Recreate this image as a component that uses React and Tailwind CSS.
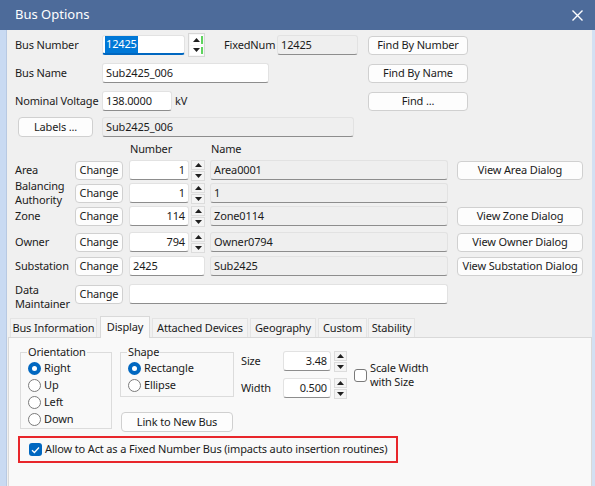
import clsx from "clsx";

function TextBox({ className, children, right = false, ro = false, focus = false }) {
  return (
    <div
      className={clsx(
        "h-[20px] shrink-0 flex items-center px-[3px] rounded-[3px] border border-[#e2e2e2] whitespace-nowrap overflow-hidden",
        focus ? "border-b-2 border-b-[#0067c0]" : "border-b-[#8d8d8d]",
        ro ? "bg-[#efefef]" : "bg-white",
        right && "justify-end",
        className
      )}
    >
      {children}
    </div>
  );
}

function Btn({ className, children }) {
  return (
    <button
      className={clsx(
        "h-[19px] shrink-0 flex items-center justify-center bg-[#fdfdfd] border border-[#d0d0d0] rounded-[4px] whitespace-nowrap",
        className
      )}
    >
      {children}
    </button>
  );
}

function Arrow({ up }) {
  return (
    <svg width="7" height="4" viewBox="0 0 7 4">
      <path d={up ? "M0 4 L3.5 0 L7 4Z" : "M0 0 L3.5 4 L7 0Z"} fill="#1f1f1f" />
    </svg>
  );
}

function Spin({ className }) {
  return (
    <div className={clsx("h-[21px] shrink-0 flex flex-col gap-[1px]", className)}>
      <div className="flex-1 bg-[#f4f4f4] border border-[#dcdcdc] flex items-center justify-center">
        <Arrow up />
      </div>
      <div className="flex-1 bg-[#f4f4f4] border border-[#dcdcdc] flex items-center justify-center">
        <Arrow />
      </div>
    </div>
  );
}

function BigSpin() {
  return (
    <div className="ml-[3px] w-[17px] h-[24px] shrink-0 flex flex-col gap-[1px] bg-[#f7f7f7] border border-[#d6d6d6] p-[1px]">
      <div className="flex-1 flex items-center justify-center relative bg-white">
        <Arrow up />
        <div className="absolute right-0 top-[1px] bottom-[1px] w-[2px] bg-[#5fd35f]" />
      </div>
      <div className="flex-1 flex items-center justify-center relative bg-white">
        <Arrow />
        <div className="absolute right-0 top-[1px] bottom-[1px] w-[2px] bg-[#5fd35f]" />
      </div>
    </div>
  );
}

function Radio({ on, label }) {
  return (
    <div className="h-[17px] flex items-center">
      {on ? (
        <div className="w-[13px] h-[13px] rounded-full bg-[#0067c0] flex items-center justify-center">
          <div className="w-[5px] h-[5px] rounded-full bg-white" />
        </div>
      ) : (
        <div className="w-[13px] h-[13px] rounded-full bg-white border border-[#7a7a7a]" />
      )}
      <span className="ml-[3px]">{label}</span>
    </div>
  );
}

function Check({ on }) {
  return on ? (
    <div className="w-[13px] h-[13px] shrink-0 rounded-[3px] bg-[#0067c0] flex items-center justify-center">
      <svg width="9" height="8" viewBox="0 0 9 8">
        <path d="M1 4.2 L3.4 6.5 L8 1.5" stroke="white" strokeWidth="1.3" fill="none" />
      </svg>
    </div>
  ) : (
    <div className="w-[13px] h-[13px] shrink-0 rounded-[3px] bg-white border border-[#7a7a7a]" />
  );
}

function RefRow({ className, label, num, name, view, spin = true }) {
  return (
    <div className={clsx("h-[22px] flex items-center pl-[8px]", className)}>
      <span className="w-[60px] shrink-0 leading-[14px]">{label}</span>
      <Btn className="w-[48px]">Change</Btn>
      {spin ? (
        <>
          <TextBox right className="ml-[6px] w-[60px]">{num}</TextBox>
          <Spin className="ml-[2px] w-[14px]" />
        </>
      ) : (
        <TextBox className="ml-[6px] w-[76px]">{num}</TextBox>
      )}
      <TextBox ro className="ml-[5px] w-[238px]">{name}</TextBox>
      {view && <Btn className="ml-[9px] w-[126px]">{view}</Btn>}
    </div>
  );
}

export default function App() {
  const tabs = [
    { name: "Bus Information", w: "w-[87px] ml-[3px]" },
    { name: "Display", w: "w-[50px] ml-[3px]", on: true },
    { name: "Attached Devices", w: "w-[96px] ml-[2px]" },
    { name: "Geography", w: "w-[66px] ml-[2px]" },
    { name: "Custom", w: "w-[49px] ml-[2px]" },
    { name: "Stability", w: "w-[47px] ml-[1px]" },
  ];

  return (
    <div className="w-[595px] h-[486px] overflow-hidden bg-[#f0f0f0] flex flex-col text-[11px] tracking-[-0.15px] text-[#1b1b1b] font-['Noto_Sans','Open_Sans',sans-serif]">
      <div className="h-[30px] shrink-0 bg-[#4d6b9a] flex items-center justify-between pl-[15px] pr-[12px] text-white text-[13px] tracking-normal">
        <span>Bus Options</span>
        <svg width="11" height="11" viewBox="0 0 11 11">
          <path d="M0.5 0.5 L10.5 10.5 M10.5 0.5 L0.5 10.5" stroke="white" strokeWidth="1.4" />
        </svg>
      </div>

      <div className="flex-1 flex min-h-0">
        <div className="w-[7px] shrink-0 bg-[#c9daf2] border-r border-[#b8c9e2]" />
        <div className="flex-1 flex flex-col min-w-0">
          {/* bus number */}
          <div className="mt-[4px] h-[22px] flex items-center pl-[8px]">
            <span className="w-[87px] shrink-0">Bus Number</span>
            <TextBox focus className="w-[83px] !px-[2px]">
              <span className="bg-[#0078d7] text-white px-[1px]">12425</span>
            </TextBox>
            <BigSpin />
            <span className="ml-[19px] w-[53px] shrink-0">FixedNum</span>
            <TextBox ro className="w-[81px]">12425</TextBox>
            <Btn className="ml-[10px] w-[100px]">Find By Number</Btn>
          </div>

          <div className="mt-[6px] h-[22px] flex items-center pl-[8px]">
            <span className="w-[87px] shrink-0">Bus Name</span>
            <TextBox className="w-[167px]">Sub2425_006</TextBox>
            <Btn className="ml-[99px] w-[100px]">Find By Name</Btn>
          </div>

          <div className="mt-[6px] h-[22px] flex items-center pl-[8px]">
            <span className="w-[87px] shrink-0 whitespace-nowrap">Nominal Voltage</span>
            <TextBox className="w-[70px]">138.0000</TextBox>
            <span className="ml-[3px] w-[20px] shrink-0">kV</span>
            <Btn className="ml-[173px] w-[100px]">Find ...</Btn>
          </div>

          <div className="mt-[4px] h-[22px] flex items-center pl-[8px]">
            <Btn className="ml-[3px] w-[75px] h-[20px]">Labels ...</Btn>
            <TextBox ro className="ml-[9px] w-[252px]">Sub2425_006</TextBox>
          </div>

          <div className="mt-[3px] h-[16px] flex items-center pl-[8px]">
            <span className="w-[115px] shrink-0" />
            <span className="w-[81px] shrink-0">Number</span>
            <span>Name</span>
          </div>

          <RefRow className="mt-[2px]" label="Area" num="1" name="Area0001" view="View Area Dialog" />
          <RefRow className="mt-[1px]" label={<>Balancing<br />Authority</>} num="1" name="1" />
          <RefRow className="mt-[1px]" label="Zone" num="114" name="Zone0114" view="View Zone Dialog" />
          <RefRow className="mt-[4px]" label="Owner" num="794" name="Owner0794" view="View Owner Dialog" />
          <RefRow className="mt-[2px]" label="Substation" num="2425" name="Sub2425" spin={false} view="View Substation Dialog" />

          <div className="mt-[6px] h-[22px] flex items-center pl-[8px]">
            <span className="w-[60px] shrink-0 leading-[14px] pt-[6px]">Data<br />Maintainer</span>
            <Btn className="w-[48px]">Change</Btn>
            <TextBox className="ml-[6px] w-[319px]" />
          </div>

          {/* tabs */}
          <div className="mt-[11px] h-[21px] shrink-0 flex items-end relative z-10">
            {tabs.map((t) =>
              t.on ? (
                <div
                  key={t.name}
                  className={clsx(
                    "h-[22px] -mb-px bg-[#f9f9f9] border border-[#d9d9d9] border-b-0 flex items-start justify-center pt-[2px] whitespace-nowrap",
                    t.w
                  )}
                >
                  {t.name}
                </div>
              ) : (
                <div
                  key={t.name}
                  className={clsx(
                    "h-[19px] bg-[#f3f3f3] border border-[#e4e4e4] border-b-0 flex items-center justify-center whitespace-nowrap",
                    t.w
                  )}
                >
                  {t.name}
                </div>
              )
            )}
          </div>

          <div className="flex-1 ml-[1px] bg-[#f9f9f9] border border-[#d9d9d9] border-b-0 flex flex-col">
            <div className="flex items-start pt-[6px] pl-[11px]">
              <fieldset className="w-[92px] border border-[#dcdcdc] pl-[7px]">
                <legend className="ml-[-1px] px-[1px] leading-[16px]">Orientation</legend>
                <Radio on label="Right" />
                <Radio label="Up" />
                <Radio label="Left" />
                <Radio label="Down" />
              </fieldset>

              <div className="ml-[8px] flex flex-col">
                <fieldset className="w-[114px] border border-[#dcdcdc] pl-[7px] pb-[2px]">
                  <legend className="ml-[-1px] px-[1px] leading-[16px]">Shape</legend>
                  <Radio on label="Rectangle" />
                  <Radio label="Ellipse" />
                </fieldset>
                <Btn className="mt-[15px] ml-[1px] w-[112px] h-[20px]">Link to New Bus</Btn>
              </div>

              <div className="ml-[7px] mt-[7px] flex flex-col">
                <div className="h-[20px] flex items-center">
                  <span className="w-[42px] shrink-0">Size</span>
                  <TextBox right className="w-[48px]">3.48</TextBox>
                  <Spin className="ml-[3px] w-[13px]" />
                </div>
                <div className="mt-[7px] h-[20px] flex items-center">
                  <span className="w-[42px] shrink-0">Width</span>
                  <TextBox right className="w-[48px]">0.500</TextBox>
                  <Spin className="ml-[3px] w-[13px]" />
                </div>
              </div>

              <div className="ml-[7px] mt-[17px] flex items-center">
                <Check />
                <span className="ml-[3px] leading-[14px]">Scale Width<br />with Size</span>
              </div>
            </div>

            <div className="mt-[4px] ml-[9px] w-[380px] h-[27px] border-2 border-[#e8262b] flex items-center pl-[9px]">
              <Check on />
              <span className="ml-[3px] whitespace-nowrap">Allow to Act as a Fixed Number Bus (impacts auto insertion routines)</span>
            </div>
          </div>
        </div>
        <div className="w-[3px] shrink-0 bg-[#d3e0f3]" />
      </div>
    </div>
  );
}
